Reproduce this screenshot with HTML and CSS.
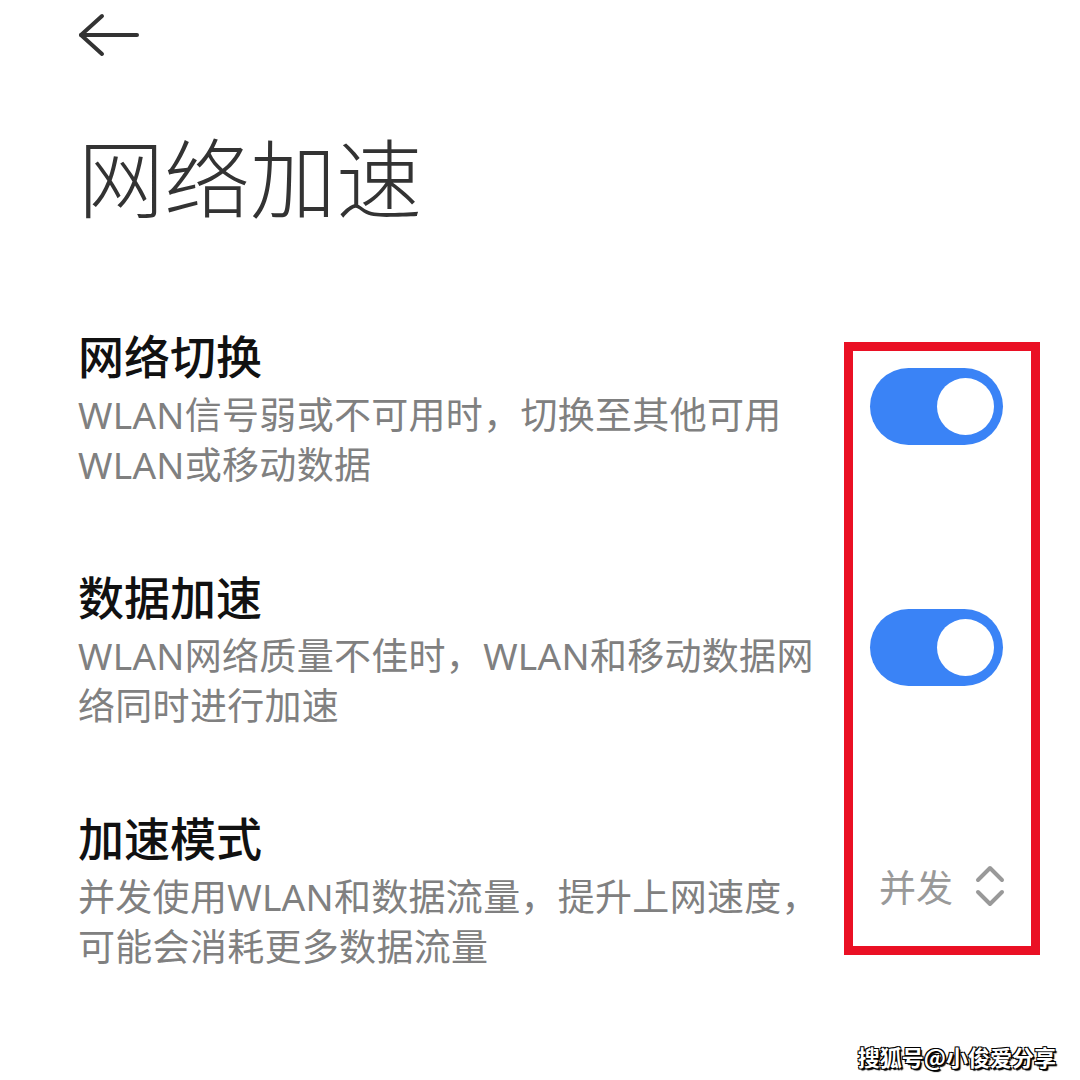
FILE: index.html
```html
<!doctype html>
<html lang="zh">

<head>
  <meta charset="utf-8">
  <title>网络加速</title>
  <meta name="viewport" content="width=device-width, initial-scale=1">
  <link rel="stylesheet" href="styles.css">
</head>

<body>
  <div id="page">
    <div class="topbar">
      <svg class="back" width="62" height="44" viewBox="0 0 62 44">
        <polyline points="24,3 3,22 24,41" />
        <line x1="3" y1="22" x2="59" y2="22" />
      </svg>
    </div>

    <h1 class="title">网络加速</h1>

    <div class="list">
      <div class="row">
        <div class="text">
          <div class="head">网络切换</div>
          <div class="desc">WLAN信号弱或不可用时，切换至其他可用WLAN或移动数据</div>
        </div>
        <div class="switch"><span class="knob"></span></div>
      </div>

      <div class="row">
        <div class="text">
          <div class="head">数据加速</div>
          <div class="desc">WLAN网络质量不佳时，WLAN和移动数据网络同时进行加速</div>
        </div>
        <div class="switch"><span class="knob"></span></div>
      </div>

      <div class="row">
        <div class="text">
          <div class="head">加速模式</div>
          <div class="desc">并发使用WLAN和数据流量，提升上网速度，可能会消耗更多数据流量</div>
        </div>
        <div class="picker">
          <span class="value">并发</span>
          <svg class="updown" width="30" height="46" viewBox="0 0 30 46">
            <polyline points="3,17 15,5 27,17" />
            <polyline points="3,29 15,41 27,29" />
          </svg>
        </div>
      </div>
    </div>

    <div id="mark"></div>
    <div id="watermark">搜狐号@小俊爱分享</div>
  </div>
</body>

</html>
```

FILE: styles.css
```css
html, body{
    margin: 0;
    padding: 0;
    background: #fff;
}
body{
    font-family: "Noto Sans", "Noto Sans CJK SC", sans-serif;
}
#page{
    position: relative;
    width: 1080px;
    height: 1080px;
    overflow: hidden;
    padding: 0 77px 0 78px;
    box-sizing: border-box;
}
.topbar{
    padding-top: 13px;
    height: 44px;
}
.back{
    display: block;
}
.back polyline, .back line{
    fill: none;
    stroke: #333;
    stroke-width: 4;
    stroke-linecap: round;
    stroke-linejoin: round;
}
.title{
    margin: 75px 0 0 0;
    font-family: "Noto Sans CJK SC", sans-serif;
    font-size: 86px;
    line-height: 86px;
    font-weight: 300;
    color: #333;
}
.list{
    margin-top: 105px;
    display: flex;
    flex-direction: column;
    gap: 74px;
}
.row{
    display: flex;
    align-items: center;
    justify-content: space-between;
}
.text{
    width: 760px;
}
.head{
    font-family: "Noto Sans CJK SC", sans-serif;
    font-size: 46px;
    line-height: 62px;
    font-weight: 500;
    color: #111;
}
.desc{
    padding-top: 5px;
    font-size: 37px;
    line-height: 50px;
    letter-spacing: 0.3px;
    color: #808080;
}
.switch{
    width: 133px;
    height: 77px;
    border-radius: 39px;
    background: #3a83f6;
    display: flex;
    align-items: center;
    justify-content: flex-end;
    padding: 0 9px;
    box-sizing: border-box;
    flex: none;
}
.knob{
    width: 57px;
    height: 57px;
    border-radius: 50%;
    background: #fff;
}
.picker{
    display: flex;
    align-items: center;
    gap: 22px;
    margin: 0 -2px 6px 0;
    flex: none;
}
.value{
    font-family: "Noto Sans CJK SC", sans-serif;
    font-size: 37px;
    line-height: 50px;
    color: #999;
}
.updown polyline{
    fill: none;
    stroke: #999;
    stroke-width: 4;
    stroke-linecap: round;
    stroke-linejoin: round;
}
#mark{
    position: absolute;
    left: 844px;
    top: 342px;
    width: 196px;
    height: 613px;
    border: 9px solid #ea1024;
    box-sizing: border-box;
}
#watermark{
    position: absolute;
    right: 24px;
    bottom: 8px;
    font-family: "Noto Sans CJK SC", sans-serif;
    font-size: 22px;
    font-weight: 700;
    color: #fff;
    text-shadow: -1px -1px 0 #000, 1px -1px 0 #000, -1px 1px 0 #000, 1px 1px 0 #000, 2px 2px 1px #000;
}
```
